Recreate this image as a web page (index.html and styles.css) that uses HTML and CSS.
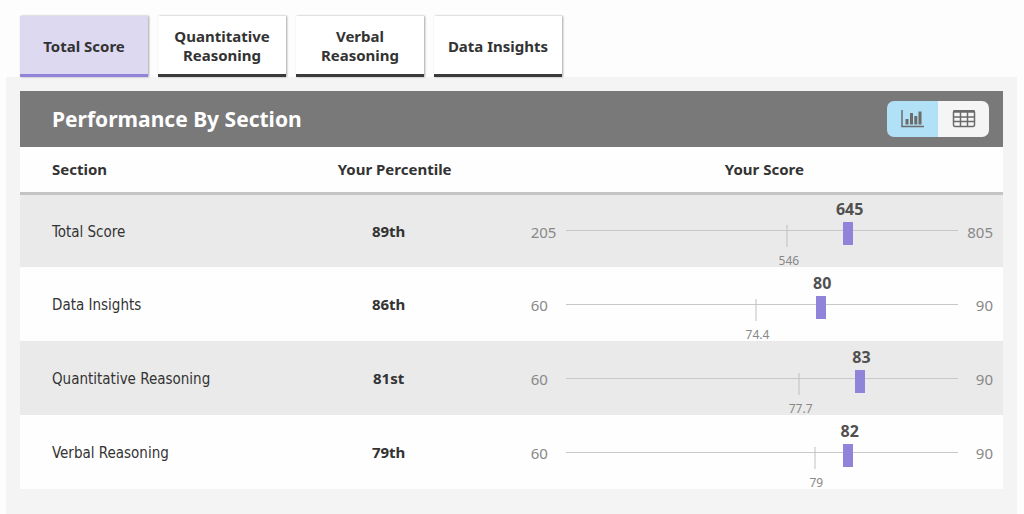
FILE: index.html
```html
<!DOCTYPE html>
<html lang="en">
<head>
    <meta charset="UTF-8">
    <meta name="viewport" content="width=device-width, initial-scale=1.0">
    <title>Performance By Section</title>
    <link rel="stylesheet" href="styles.css">
</head>
<body>
    <div class="tabs">
        <button type="button" class="tab active">Total Score</button>
        <button type="button" class="tab">Quantitative Reasoning</button>
        <button type="button" class="tab">Verbal Reasoning</button>
        <button type="button" class="tab">Data Insights</button>
    </div>
    <div class="panel">
        <div class="header">
            <h2>Performance By Section</h2>
            <div class="toggle">
                <button type="button" class="active" aria-label="Chart view">
                    <svg width="24" height="20" viewBox="0 0 24 20">
                        <path d="M1 1v16.500h22" fill="none" stroke="#6b6b6b" stroke-width="1.5"/>
                        <path d="M4.500 10h3v5.500h-3zM9 4h3v11.500h-3zM13.300 7h3v8.500h-3zM17.500 2.500h3v13h-3z" fill="#6b6b6b"/>
                    </svg>
                </button>
                <button type="button" aria-label="Table view">
                    <svg width="24" height="20" viewBox="0 0 24 20">
                        <rect x="1.500" y="1.800" width="21" height="15.800" rx="1.500" fill="none" stroke="#6b6b6b" stroke-width="1.500"/>
                        <path d="M1.500 2.500h21" stroke="#6b6b6b" stroke-width="2.500"/>
                        <path d="M1.500 8h21M1.500 12.500h21M8.500 3v15M15.500 3v15" stroke="#6b6b6b" stroke-width="1.500"/>
                    </svg>
                </button>
            </div>
        </div>
        <table class="scores">
            <thead>
                <tr>
                    <th class="name">Section</th>
                    <th class="percentile">Your Percentile</th>
                    <th class="score">Your Score</th>
                </tr>
            </thead>
            <tbody>
                <tr>
                    <td class="name">Total Score</td>
                    <td class="percentile">89th</td>
                    <td class="score">
                        <div class="chart">
                            <span class="min">205</span>
                            <div class="track">
                                <div class="mean" style="left: 56.5%"><span>546</span></div>
                                <div class="mark" style="left: 72%"><span>645</span></div>
                            </div>
                            <span class="max">805</span>
                        </div>
                    </td>
                </tr>
                <tr>
                    <td class="name">Data Insights</td>
                    <td class="percentile">86th</td>
                    <td class="score">
                        <div class="chart">
                            <span class="min">60</span>
                            <div class="track">
                                <div class="mean" style="left: 48.5%"><span>74.4</span></div>
                                <div class="mark" style="left: 65%"><span>80</span></div>
                            </div>
                            <span class="max">90</span>
                        </div>
                    </td>
                </tr>
                <tr>
                    <td class="name">Quantitative Reasoning</td>
                    <td class="percentile">81st</td>
                    <td class="score">
                        <div class="chart">
                            <span class="min">60</span>
                            <div class="track">
                                <div class="mean" style="left: 59.5%"><span>77.7</span></div>
                                <div class="mark" style="left: 75%"><span>83</span></div>
                            </div>
                            <span class="max">90</span>
                        </div>
                    </td>
                </tr>
                <tr>
                    <td class="name">Verbal Reasoning</td>
                    <td class="percentile">79th</td>
                    <td class="score">
                        <div class="chart">
                            <span class="min">60</span>
                            <div class="track">
                                <div class="mean" style="left: 63.5%"><span>79</span></div>
                                <div class="mark" style="left: 72%"><span>82</span></div>
                            </div>
                            <span class="max">90</span>
                        </div>
                    </td>
                </tr>
            </tbody>
        </table>
    </div>
</body>
</html>
```

FILE: styles.css
```css
* {
    margin: 0;
    padding: 0;
    box-sizing: border-box;
}

body {
    display: flex;
    flex-direction: column;
    min-height: 100vh;
    padding: 16px 7px 0 6px;
    background-color: #fdfdfd;
    color: #333;
    font-family: "Noto Sans", sans-serif;
    font-size: 15px;
}

button {
    border: none;
    color: inherit;
    font: inherit;
    cursor: pointer;
}

/* tabs */
.tabs {
    position: relative;
    display: flex;
    gap: 10px;
    padding: 0 14px;
}

.tab {
    width: 128px;
    height: 61px;
    padding: 2px 10px 0;
    border-bottom: 3px solid #3a3a3a;
    background-color: #fff;
    box-shadow: 1px 0 2px rgba(0, 0, 0, 0.35);
    font-weight: 700;
    line-height: 19px;
}

.tab.active {
    border-bottom-color: #8f84da;
    background-color: #dcd9f1;
}

/* panel */
.panel {
    flex: 1;
    padding: 14px 14px 25px;
    background-color: #f4f4f4;
}

.header {
    display: flex;
    align-items: center;
    justify-content: space-between;
    height: 56px;
    padding: 0 14px 0 32px;
    background-color: #797979;
    color: #fff;
}

.header h2 {
    font-size: 21px;
    font-weight: 700;
}

.toggle {
    display: flex;
    overflow: hidden;
    border-radius: 7px;
}

.toggle button {
    display: flex;
    align-items: center;
    justify-content: center;
    width: 51px;
    height: 36px;
    background-color: #f5f5f5;
}

.toggle button.active {
    background-color: #b0e1f6;
}

/* table */
.scores {
    width: 100%;
    table-layout: fixed;
    border-collapse: collapse;
}

.scores th {
    height: 46px;
    border-bottom: 3px solid #c4c4c4;
    background-color: #fefefe;
}

.scores td {
    height: 74px;
    background-color: #fefefe;
}

.scores tr:nth-child(odd) td {
    background-color: #eaeaea;
}

.scores .name {
    width: 26%;
    padding-left: 32px;
    text-align: left;
}

.scores td.name {
    padding-top: 2px;
    font-family: "DejaVu Sans Condensed", "DejaVu Sans", sans-serif;
}

.scores .percentile {
    width: 23%;
    text-align: center;
}

.scores .score {
    width: 51%;
}

.scores th.percentile {
    padding-left: 12px;
}

.scores th.score {
    padding-left: 24px;
}

.scores td.percentile {
    font-weight: 700;
}

.scores td.score {
    padding: 0 10px 0 29px;
}

/* score line */
.chart {
    display: flex;
    align-items: center;
    height: 72px;
    color: #888;
}

.chart .min,
.chart .max {
    width: 35px;
    padding-top: 2px;
}

.chart .max {
    text-align: right;
}

.track {
    position: relative;
    flex: 1;
    height: 1px;
    background-color: #c8c8c8;
}

.mean,
.mark {
    position: absolute;
    display: flex;
    justify-content: center;
    transform: translateX(-50%);
}

.mean {
    top: -5px;
    width: 1px;
    height: 22px;
    background-color: #c0c0c0;
}

.mark {
    top: -8px;
    width: 10px;
    height: 23px;
    background-color: #8f84da;
}

.mean span,
.mark span {
    position: absolute;
    padding-left: 3px;
}

.mean span {
    top: 27px;
    font-size: 12px;
    line-height: 18px;
}

.mark span {
    bottom: 25px;
    color: #505050;
    font-size: 16px;
    font-weight: 700;
    line-height: 22px;
}
```
